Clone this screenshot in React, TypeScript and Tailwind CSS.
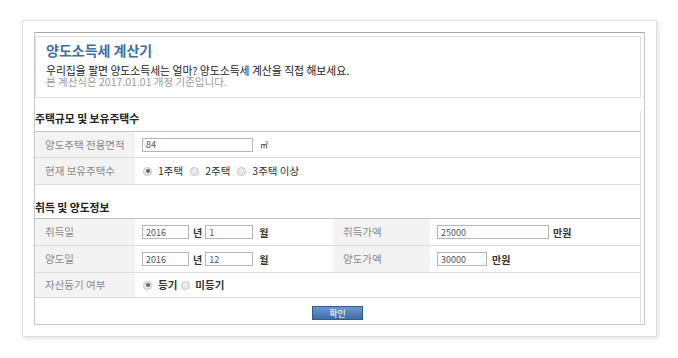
import React from 'react'

const font = { fontFamily: '"Noto Sans CJK KR", "Noto Sans", sans-serif' }

function Radio({ checked }: { checked?: boolean }) {
  return (
    <span className="inline-flex h-[9px] w-[9px] shrink-0 items-center justify-center rounded-full border border-[#c4c4c4] bg-[#eaeaea]">
      {checked && <span className="h-[4px] w-[4px] rounded-full bg-[#666]" />}
    </span>
  )
}

function Field({ value, w }: { value: string; w: string }) {
  return (
    <div
      className={`flex h-[14px] items-center border border-[#b5b5b5] bg-white pl-[3px] text-[9px] leading-none text-[#555] ${w}`}
    >
      {value}
    </div>
  )
}

function Label({ children, w = 'w-[100px]' }: { children: React.ReactNode; w?: string }) {
  return (
    <div className={`flex h-full shrink-0 items-center bg-[#f3f3f3] pl-[10px] text-[10.5px] text-[#8a8a8a] ${w}`}>
      {children}
    </div>
  )
}

function Row({ children, h = 'h-[26px]' }: { children: React.ReactNode; h?: string }) {
  return <div className={`flex items-center border-b border-[#dcdcdc] ${h}`}>{children}</div>
}

export default function App() {
  return (
    <div className="h-[358px] w-[678px] bg-white pl-[22px] pt-[20px]" style={font}>
      <div className="h-[317px] w-[635px] border border-[#dedede] bg-white pl-[11px] pt-[11px] shadow-[2px_2px_4px_rgba(0,0,0,0.1)]">
        <div className="h-[293px] w-[611px] border border-[#c8c8c8] border-t-[#a8a8a8] bg-white">
          <div className="mr-[3px] mt-[3px] h-[62px] border border-[#dedede] pl-[10px] pt-[5px]">
            <div className="text-[14px] font-bold leading-[16px] text-[#3f6e9f]">양도소득세 계산기</div>
            <div className="mt-[6px] text-[10.8px] leading-[12px] text-[#222]">
              우리집을 팔면 양도소득세는 얼마? 양도소득세 계산을 직접 해보세요.
            </div>
            <div className="text-[10.5px] leading-[12px] text-[#9a9a9a]">본 계산식은 2017.01.01 개정 기준입니다.</div>
          </div>

          <div className="mr-[3px] border-r border-[#dedede]">
            <div className="mb-[6px] mt-[13px] text-[10.8px] font-bold leading-[14px] text-[#222]">
              주택규모 및 보유주택수
            </div>
            <div className="border-t border-[#c4c4c4]">
              <Row>
                <Label>양도주택 전용면적</Label>
                <div className="flex items-center pl-[7px]">
                  <Field value="84" w="w-[111px]" />
                  <span className="ml-[7px] text-[8px] text-[#333]">㎡</span>
                </div>
              </Row>
              <Row h="h-[27px]">
                <Label>현재 보유주택수</Label>
                <div className="flex items-center pl-[8px] text-[10.5px] text-[#333]">
                  <Radio checked />
                  <span className="ml-[6px] mr-[7px]">1주택</span>
                  <Radio />
                  <span className="ml-[6px] mr-[7px]">2주택</span>
                  <Radio />
                  <span className="ml-[6px]">3주택 이상</span>
                </div>
              </Row>
            </div>

            <div className="mb-[4px] mt-[15px] text-[10.8px] font-bold leading-[14px] text-[#222]">
              취득 및 양도정보
            </div>
            <div className="border-t border-[#c4c4c4]">
              <Row h="h-[27px]">
                <Label>취득일</Label>
                <div className="flex w-[198px] items-center pl-[7px] text-[10px] text-[#333]">
                  <Field value="2016" w="w-[47px]" />
                  <span className="ml-[4px] mr-[3px] font-bold">년</span>
                  <Field value="1" w="w-[48px]" />
                  <span className="ml-[6px] font-bold">월</span>
                </div>
                <Label w="w-[97px]">취득가액</Label>
                <div className="flex items-center pl-[7px] text-[10px] text-[#333]">
                  <Field value="25000" w="w-[112px]" />
                  <span className="ml-[4px] font-bold">만원</span>
                </div>
              </Row>
              <Row h="h-[27px]">
                <Label>양도일</Label>
                <div className="flex w-[198px] items-center pl-[7px] text-[10px] text-[#333]">
                  <Field value="2016" w="w-[47px]" />
                  <span className="ml-[4px] mr-[3px] font-bold">년</span>
                  <Field value="12" w="w-[48px]" />
                  <span className="ml-[6px] font-bold">월</span>
                </div>
                <Label w="w-[97px]">양도가액</Label>
                <div className="flex items-center pl-[7px] text-[10px] text-[#333]">
                  <Field value="30000" w="w-[50px]" />
                  <span className="ml-[5px] font-bold">만원</span>
                </div>
              </Row>
              <Row h="h-[25px]">
                <Label>자산등기 여부</Label>
                <div className="flex items-center pl-[8px] text-[10.5px] text-[#333]">
                  <Radio checked />
                  <span className="ml-[6px] mr-[4px] font-bold">등기</span>
                  <Radio />
                  <span className="ml-[5px] font-bold">미등기</span>
                </div>
              </Row>
            </div>
            <div className="flex h-[25px] items-center justify-center pt-[5px]">
              <button className="flex h-[14px] w-[51px] items-center justify-center border border-[#2f5c8f] bg-gradient-to-b from-[#6b98cb] to-[#3e6ea6] text-[9px] leading-none text-white">
                확인
              </button>
            </div>
          </div>
        </div>
      </div>
    </div>
  )
}
